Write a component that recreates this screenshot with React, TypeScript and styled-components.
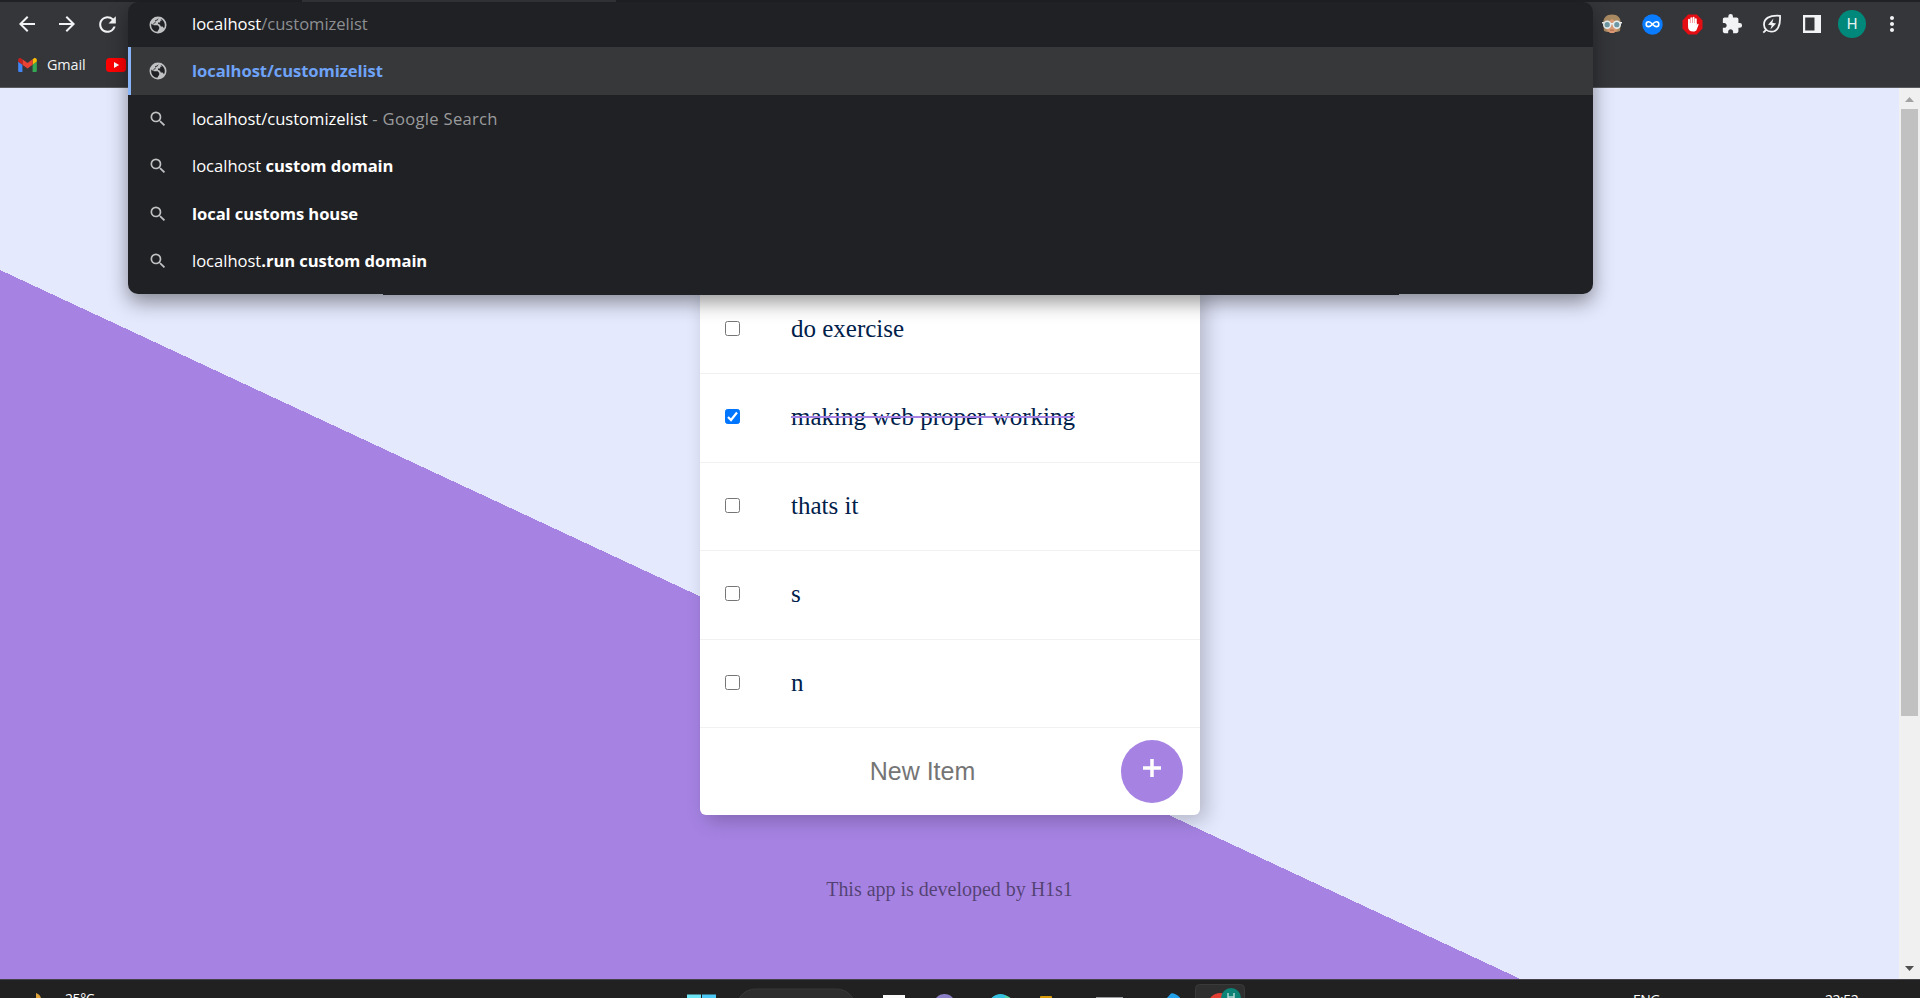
import React from "react";
import styled, { createGlobalStyle } from "styled-components";
import { MdArrowBack, MdArrowForward, MdRefresh, MdSearch, MdExtension, MdMoreVert } from "react-icons/md";

const ui = `"Open Sans", "Noto Sans", sans-serif`;
const serif = `"Liberation Serif", "Times New Roman", serif`;

const Global = createGlobalStyle`
  * { box-sizing: border-box; }
  body { margin: 0; overflow: hidden; }
`;

const Screen = styled.div`
  position: relative;
  width: 1920px;
  height: 998px;
  overflow: hidden;
  display: flex;
  flex-direction: column;
  font-family: ${ui};
`;

const TabStrip = styled.div`
  height: 2px;
  background: #202124;
  padding-left: 302px;
`;
const ActiveTab = styled.div`
  width: 314px;
  height: 2px;
  background: #35363a;
`;
const BrowserBar = styled.header`
  height: 86px;
  background: #35363a;
  border-bottom: 1px solid #5a5b60;
  color: #f1f3f4;
`;
const Toolbar = styled.div`
  height: 44px;
  display: flex;
  align-items: center;
  justify-content: space-between;
  padding: 0 8px 0 15px;
`;
const NavIcons = styled.div`
  display: flex;
  align-items: center;
  gap: 16px;
  svg { display: block; }
`;
const Extensions = styled.div`
  display: flex;
  align-items: center;
`;
const Slot = styled.span`
  width: 40px;
  display: flex;
  justify-content: center;
  svg { display: block; }
`;
const Avatar = styled.span`
  width: 28px;
  height: 28px;
  border-radius: 50%;
  background: #00897b;
  color: #e4f3f1;
  display: flex;
  align-items: center;
  justify-content: center;
  font: 15px Roboto, sans-serif;
`;
const Bookmarks = styled.div`
  height: 40px;
  display: flex;
  align-items: center;
  padding: 0 0 2px 18px;
  font-size: 14.4px;
  letter-spacing: -0.1px;
  svg { display: block; }
`;
const BookmarkLabel = styled.span`
  width: 69px;
  padding: 0 0 2px 10px;
  flex: none;
`;

const Viewport = styled.div`
  height: 891px;
  display: flex;
`;
const Page = styled.main`
  width: 1899px;
  height: 891px;
  background: linear-gradient(25deg, #a683e3 642.6px, #e4e9fd 642.6px);
  display: flex;
  flex-direction: column;
  align-items: center;
  padding-top: 197.5px;
`;
const List = styled.section`
  width: 500px;
  margin-left: 1px;
  background: #fff;
  border-radius: 0 0 6px 6px;
  box-shadow: 6px 6px 19px rgba(0, 0, 0, 0.22);
  flex: none;
`;
const Item = styled.div`
  height: 88.5px;
  border-bottom: 1px solid #f1f1f1;
  display: flex;
  align-items: center;
  padding: 0 0 1px 25px;
`;
const Check = styled.input`
  appearance: none;
  margin: 0 51px 0 0;
  width: 15px;
  height: 15px;
  border: 1px solid #767676;
  border-radius: 2.5px;
  background: #fff;
  flex: none;
  &:checked {
    border-color: #0075ff;
    background: #0075ff;
  }
`;
const CheckBox = styled.label`
  position: relative;
  display: flex;
  margin-bottom: 1px;
  svg { position: absolute; left: 0; top: 0; }
`;
const Label = styled.p<{ $done?: boolean }>`
  position: relative;
  margin: 0;
  font: 25px/30px ${serif};
  color: #00204a;
  ${(p) =>
    p.$done &&
    `&::before { content: ""; position: absolute; left: 0; right: 0; top: 13.75px; height: 2px; background: #a683e3; }`}
`;
const NewItem = styled.div`
  height: 87px;
  display: flex;
  align-items: center;
`;
const NewText = styled.span`
  width: 421px;
  padding-left: 24px;
  text-align: center;
  font: 25px "Liberation Sans", Arial, sans-serif;
  color: #757575;
`;
const AddButton = styled.button`
  width: 62px;
  height: 63px;
  border: 0;
  padding: 0 0 7px;
  border-radius: 50%;
  background: #a683e3;
  display: flex;
  align-items: center;
  justify-content: center;
`;
const Footer = styled.footer`
  margin-top: 62px;
  font: 20px/24px ${serif};
  letter-spacing: -0.02px;
  color: rgba(0, 0, 0, 0.5);
`;

const Scrollbar = styled.div`
  width: 21px;
  background: #f0f0f0;
  display: flex;
  flex-direction: column;
  align-items: center;
`;
const Thumb = styled.div`
  width: 17px;
  height: 607px;
  background: #c1c1c1;
`;
const Arrow = styled.div<{ $down?: boolean }>`
  height: 21px;
  padding-top: ${(p) => (p.$down ? 8 : 9)}px;
  margin-top: ${(p) => (p.$down ? "auto" : 0)};
  svg { display: block; }
`;

const Omnibox = styled.div`
  position: absolute;
  left: 128px;
  top: 2px;
  width: 1465px;
  height: 292px;
  border-radius: 10px;
  background: #202124;
  box-shadow: 0 8px 20px rgba(0, 0, 0, 0.42);
`;
const BottomEdge = styled.div`
  position: absolute;
  left: 255px;
  bottom: -1px;
  width: 1016px;
  height: 1px;
  background: #202124;
`;
const Suggestion = styled.div<{ $h?: number; $active?: boolean }>`
  height: ${(p) => p.$h ?? 47.5}px;
  display: flex;
  align-items: center;
  padding-left: 20px;
  font-size: 16.6px;
  white-space: pre;
  color: #fff;
  background: ${(p) => (p.$active ? "#37383a" : "transparent")};
  box-shadow: ${(p) => (p.$active ? "inset 3px 0 #8ab4f8" : "none")};
  svg { width: 20px; height: 20px; flex: none; margin-right: 24px; color: #c0c1c3; }
`;
const Url = styled.span<{ $c?: string; $b?: boolean; $ls?: number }>`
  padding-bottom: 1.5px;
  color: ${(p) => p.$c ?? "#fff"};
  font-weight: ${(p) => (p.$b ? 700 : 400)};
  letter-spacing: ${(p) => p.$ls ?? (p.$b ? -0.07 : -0.03)}px;
`;

const Taskbar = styled.div`
  height: 19px;
  background: #212121;
  border-top: 1px solid #45414b;
  overflow: hidden;
  display: flex;
  color: #fff;
  font-size: 14px;
  line-height: 18px;
`;
const Weather = styled.div`
  width: 680px;
  flex: none;
  display: flex;
  padding-left: 36px;
  svg { display: block; margin-top: 13px; }
  span { padding: 10px 0 0 23px; letter-spacing: -0.4px; }
`;
const Apps = styled.div`
  width: 562px;
  flex: none;
  svg { display: block; }
`;
const Tray = styled.div`
  width: 287px;
  margin-left: auto;
  display: flex;
  padding-top: 10.5px;
  letter-spacing: -0.5px;
`;
const TrayText = styled.span<{ $w: number }>`
  width: ${(p) => p.$w}px;
`;

const items = [
  { text: "do exercise" },
  { text: "making web proper working", done: true },
  { text: "thats it" },
  { text: "s" },
  { text: "n" },
];

function Globe() {
  return (
    <svg viewBox="0 0 20 20">
      <circle cx="10" cy="10" r="8.5" fill="#c0c1c3" />
      <path
        d="M10.800 3.200 9.500 5.200 7.300 6.300 7.500 8 5.600 8.800 5.900 10.200H9.800L11.200 12v1.800L9.300 16.800C5.800 16.500 3.200 13.700 3.200 10.200c0-.6.1-1.200.2-1.700L5.400 10.200V8.200L7 7.200V5.500L9 4.500z"
        fill="#202124"
      />
      <path d="M12.500 3.700C15 4.700 16.800 7.200 16.800 10c0 1.200-.3 2.300-.8 3.200L14.600 11.500H12.800L12 9.800 10 8.800V7.500h2.200V5.800h1.600z" fill="#202124" />
    </svg>
  );
}

function Gmail() {
  return (
    <svg width="19" height="14" viewBox="52 42 88 66">
      <path fill="#4285f4" d="M58 108h14V74L52 59v43c0 3.32 2.69 6 6 6" />
      <path fill="#34a853" d="M120 108h14c3.32 0 6-2.69 6-6V59l-20 15" />
      <path fill="#fbbc04" d="M120 48v26l20-15v-8c0-7.42-8.47-11.65-14.4-7.2" />
      <path fill="#ea4335" d="M72 74V48l24 18 24-18v26L96 92" />
      <path fill="#c5221f" d="M52 51v8l20 15V48l-5.6-4.2c-5.94-4.45-14.4-.22-14.4 7.2" />
    </svg>
  );
}

function YouTube() {
  return (
    <svg width="20" height="14" viewBox="0 0 20 14">
      <rect width="20" height="14" rx="3.5" fill="#f00" />
      <path d="M8 4l5.2 3L8 10z" fill="#fff" />
    </svg>
  );
}

function Glasses() {
  return (
    <svg width="20" height="20" viewBox="0 0 20 20">
      <path d="M1.500 12C0 3 5 .5 10 .5S20 3 18.500 12l-.5 5-3 1H5l-3-1z" fill="#a88a62" />
      <path d="M4 9l6-4 6 4v6.500L12 19H8l-4-3.500z" fill="#d99a73" />
      <circle cx="5.200" cy="10.700" r="3.400" fill="#6d98a3" stroke="#e9eef0" strokeWidth="1.600" />
      <circle cx="14.800" cy="10.700" r="3.400" fill="#6d98a3" stroke="#e9eef0" strokeWidth="1.600" />
      <path d="M0 8.700h2.500M17.500 8.700H20M8.500 9.700h3" stroke="#e9eef0" strokeWidth="1.600" />
      <path d="M8 16.200h4" stroke="#b66a50" strokeWidth="1" />
    </svg>
  );
}

function Loop() {
  return (
    <svg width="21" height="21" viewBox="0 0 21 21">
      <circle cx="10.5" cy="10.5" r="10.2" fill="#0a7cff" />
      <path
        d="M10.5 10.200C9 8.500 8 7.800 6.600 7.800a2.400 2.400 0 000 4.800c1.400 0 2.400-.7 3.900-2.400s2.500-2.400 3.900-2.400a2.400 2.400 0 010 4.800c-1.400 0-2.400-.7-3.900-2.400z"
        fill="none"
        stroke="#fff"
        strokeWidth="1.600"
      />
    </svg>
  );
}

function StopHand() {
  return (
    <svg width="21" height="21" viewBox="0 0 21 21">
      <path d="M6.2.5h8.6l5.7 6v8l-5.7 6H6.2l-5.7-6v-8z" fill="#e40d12" />
      <path d="M7 10V5.800M9.300 10V4.200M11.600 10V3.700M13.800 10V5.200" stroke="#fff" strokeWidth="1.900" strokeLinecap="round" />
      <path d="M6.050 9h8.700v2.500l.5-1.300c.5-1 1.600-.6 1.300.5l-1.700 4.500c-.7 1.800-1.800 2.400-3.600 2.400-3.500 0-5.200-1.600-5.200-5z" fill="#fff" />
    </svg>
  );
}

function EnergyLeaf() {
  return (
    <svg width="20" height="20" viewBox="0 0 20 20" fill="none" stroke="#f1f3f4" strokeWidth="1.8">
      <path d="M18 1.8C7 1 2 4.500 2 10.500c0 2 .8 3.800 2 5 1.400 1.500 3.200 2.200 5.200 2.200C15.500 17.700 18.600 12 18 1.800zM4.500 15.500L1.300 18.600" />
      <path d="M11.500 4.500L6 10.700l3.700.6-1.300 4.200 5.700-6.100-3.800-.7z" fill="#f1f3f4" stroke="none" />
    </svg>
  );
}

function SidePanel() {
  return (
    <svg width="18" height="18" viewBox="0 0 18 18">
      <path d="M0 0h18v18H0zM2.200 2.600v12.800h9.300V2.600z" fill="#f1f3f4" fillRule="evenodd" />
    </svg>
  );
}

function TaskIcons() {
  return (
    <svg width="562" height="18" viewBox="680 980 562 18" overflow="visible">
      <rect x="687" y="994.500" width="14" height="8" fill="#6fe6f6" />
      <rect x="702" y="994.500" width="14" height="8" fill="#4cc9f5" />
      <rect x="736.500" y="989" width="119" height="38" rx="19" fill="#2d2d2d" stroke="#393939" />
      <rect x="883" y="995" width="22" height="8" fill="#fafafa" />
      <circle cx="944.500" cy="1005" r="11" fill="#8a7fc4" />
      <circle cx="1000.500" cy="1006" r="12" fill="#35c1df" />
      <path d="M1005 995.500q5 1 7 4h-7z" fill="#52d3a5" />
      <rect x="1040" y="996" width="12" height="8" rx="1" fill="#d99a08" />
      <rect x="1096" y="997" width="27" height="4" fill="#9a9da0" />
      <path d="M1166 999l5-5.500q3-1 9 4v3z" fill="#23a0ea" />
      <rect x="1195.500" y="984.500" width="49" height="40" rx="4" fill="#2f2f2f" stroke="#3a3a3a" />
      <circle cx="1220" cy="1005" r="12" fill="#e43d32" />
      <circle cx="1231" cy="998" r="10" fill="#0b8376" />
      <path d="M1228 993v7M1234 993v7M1228 997h6" stroke="#b4d8d3" strokeWidth="1.500" />
    </svg>
  );
}

export default function App() {
  return (
    <Screen>
      <Global />
      <TabStrip><ActiveTab /></TabStrip>
      <BrowserBar>
        <Toolbar>
          <NavIcons>
            <MdArrowBack size={24} />
            <MdArrowForward size={24} />
            <MdRefresh size={25} />
          </NavIcons>
          <Extensions>
            <Slot><Glasses /></Slot>
            <Slot><Loop /></Slot>
            <Slot><StopHand /></Slot>
            <Slot><MdExtension size={22} /></Slot>
            <Slot><EnergyLeaf /></Slot>
            <Slot><SidePanel /></Slot>
            <Slot><Avatar>H</Avatar></Slot>
            <Slot><MdMoreVert size={24} /></Slot>
          </Extensions>
        </Toolbar>
        <Bookmarks>
          <Gmail />
          <BookmarkLabel>Gmail</BookmarkLabel>
          <YouTube />
        </Bookmarks>
      </BrowserBar>

      <Viewport>
        <Page>
          <List>
            {items.map((item) => (
              <Item key={item.text}>
                <CheckBox>
                  <Check type="checkbox" defaultChecked={item.done} />
                  {item.done && (
                    <svg width="15" height="15" viewBox="0 0 15 15">
                      <path d="M3 8l3 3 6-7.500" fill="none" stroke="#fff" strokeWidth="2.200" />
                    </svg>
                  )}
                </CheckBox>
                <Label $done={item.done}>{item.text}</Label>
              </Item>
            ))}
            <NewItem>
              <NewText>New Item</NewText>
              <AddButton aria-label="Add">
                <svg width="20" height="20" viewBox="0 0 20 20">
                  <path d="M10 1v18M1 10h18" stroke="#fff" strokeWidth="3.500" />
                </svg>
              </AddButton>
            </NewItem>
          </List>
          <Footer>This app is developed by H1s1</Footer>
        </Page>
        <Scrollbar>
          <Arrow><svg width="9" height="5" viewBox="0 0 9 5"><path d="M0 5l4.500-5L9 5z" fill="#a3a3a3" /></svg></Arrow>
          <Thumb />
          <Arrow $down><svg width="9" height="5" viewBox="0 0 9 5"><path d="M0 0l4.500 5L9 0z" fill="#505050" /></svg></Arrow>
        </Scrollbar>
      </Viewport>

      <Taskbar>
        <Weather>
          <svg width="6" height="6" viewBox="0 0 6 6"><path d="M0 0q5 2 5 6H0z" fill="#e0a23a" /></svg>
          <span>25°C</span>
        </Weather>
        <Apps><TaskIcons /></Apps>
        <Tray>
          <TrayText $w={192}>ENG</TrayText>
          <TrayText $w={60}>22:52</TrayText>
        </Tray>
      </Taskbar>

      <Omnibox>
        <Suggestion $h={45}><Globe /><Url>localhost</Url><Url $c="#8d8f92">/customizelist</Url></Suggestion>
        <Suggestion $h={48} $active><Globe /><Url $b $c="#6ea3f8">localhost/customizelist</Url></Suggestion>
        <Suggestion><MdSearch /><Url>localhost/customizelist</Url><Url $c="#9a9b9d" $ls={0.3}> - Google Search</Url></Suggestion>
        <Suggestion><MdSearch /><Url>localhost </Url><Url $b>custom domain</Url></Suggestion>
        <Suggestion><MdSearch /><Url $b>local customs house</Url></Suggestion>
        <Suggestion><MdSearch /><Url>localhost</Url><Url $b>.run custom domain</Url></Suggestion>
        <BottomEdge />
      </Omnibox>
    </Screen>
  );
}
